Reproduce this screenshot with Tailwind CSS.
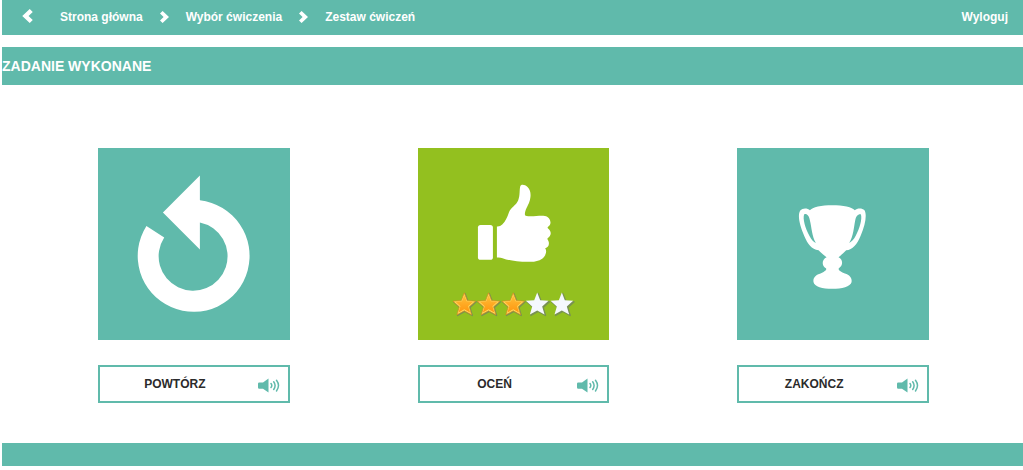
<!DOCTYPE html>
<html lang="pl">
<head>
<meta charset="utf-8">
<meta name="viewport" content="width=device-width, initial-scale=1">
<title>Zadanie wykonane</title>
<script src="https://cdn.jsdelivr.net/npm/@tailwindcss/browser@4"></script>
</head>
<body class="bg-white pl-0.5 font-['Liberation_Sans',Arial,sans-serif] text-[#2b2b2b]">
<svg class="hidden" aria-hidden="true">
  <defs>
    <symbol id="chevron" viewBox="0 0 9 12"><path d="M0 2.600 2.600 0 9 6 2.600 12 0 9.400 3.600 6Z" fill="#fff"/></symbol>
    <symbol id="speaker" viewBox="0 0 22 15">
      <path d="M1.2 4.5H5L10.5.5V14.5L5 10.7H1.2Q0 10.7 0 9.500V5.700Q0 4.500 1.200 4.500Z" fill="#60baab"/>
      <path d="M13 5.500Q14.600 7.500 13 9.500M15.700 3.800Q18.500 7.500 15.700 11.500M18.500 2.300Q22.500 7.500 18.500 13" fill="none" stroke="#60baab" stroke-width="1.500" stroke-linecap="round"/>
    </symbol>
    <path id="star" d="M0-34 9-11 34-9 15 8 22 32 0 20-22 32-15 8-34-9-9-11Z"/>
  </defs>
</svg>

<header class="flex h-[35px] items-center justify-between bg-[#60baab] pr-[15px] pb-0.5 pl-5 text-xs font-bold text-white">
  <nav aria-label="Ścieżka" class="flex items-center gap-[17px]">
    <a href="#" aria-label="Wstecz" class="mr-[10px] mb-0.5"><svg class="h-[14px] w-[11px] rotate-180"><use href="#chevron"/></svg></a>
    <a href="#">Strona główna</a>
    <svg class="h-3 w-[9px]" aria-hidden="true"><use href="#chevron"/></svg>
    <a href="#">Wybór ćwiczenia</a>
    <svg class="h-3 w-[9px]" aria-hidden="true"><use href="#chevron"/></svg>
    <a href="#">Zestaw ćwiczeń</a>
  </nav>
  <a href="#">Wyloguj</a>
</header>

<h1 class="mt-3 flex h-[38px] items-center bg-[#60baab] text-sm font-bold text-white">ZADANIE WYKONANE</h1>

<main class="grid grid-cols-3 pt-[63px] pr-[30px] pb-10 pl-8">
  <section class="mx-auto flex w-3/5 flex-col gap-[25px]">
    <button type="button" aria-labelledby="repeat" class="aspect-square w-full bg-[#60baab]">
      <svg viewBox="0 0 192 192" class="block w-full" fill="#fff">
        <path d="M102 27.500V52.400A56 56 0 1 1 48.500 78L66.300 89.500A34.500 34.500 0 1 0 102 74.500V101.500L65 64.500Z"/>
      </svg>
    </button>
    <div class="flex h-[38px] items-center border-2 border-[#60baab] pr-2">
      <span id="repeat" class="flex-1 text-center text-xs font-bold">POWTÓRZ</span>
      <button type="button" aria-label="Odsłuchaj: Powtórz" class="mt-1 ml-2"><svg class="block h-[15px] w-[22px]"><use href="#speaker"/></svg></button>
    </div>
  </section>

  <section class="mx-auto flex w-3/5 flex-col gap-[25px]">
    <button type="button" aria-labelledby="rate" class="aspect-square w-full bg-[#93c01f]">
      <svg viewBox="0 0 192 192" class="block w-full" fill="#fff">
        <defs>
          <linearGradient id="gold" x1="0" y1="0" x2="0" y2="1">
            <stop offset="0" stop-color="#ffbe38"/><stop offset="1" stop-color="#ff9610"/>
          </linearGradient>
        </defs>
        <g transform="translate(47 27) scale(.3333)">
          <rect x="39" y="150" width="45" height="105" rx="8"/>
          <path d="M96 155Q105 156 112 149C122 139 127 128 132 113C137 97 154 92 160 76C166 60 163 48 166 35C167 27 180 28 188 36C200 47 198 66 194 79C189 95 180 104 180 119Q180 124 190 124C210 125 225 121 240 123C253 125 261 140 255 150C252 154 246 156 249 160C261 169 260 182 249 189C245 193 251 195 252 203C253 212 249 217 241 220C247 228 243 242 234 250C222 260 205 261 190 261C155 261 132 257 113 250Q106 247 96 248Z"/>
        </g>
        <g transform="translate(27 137) scale(.3333)" stroke-linejoin="round">
          <g fill="#6f7f68" stroke="#6f7f68" stroke-width="4" opacity=".7">
            <use href="#star" x="60" y="60"/><use href="#star" x="133" y="60"/><use href="#star" x="207" y="60"/><use href="#star" x="280" y="60"/><use href="#star" x="354" y="60"/>
          </g>
          <g fill="#ffdc62" stroke="#d98a18" stroke-width="2">
            <use href="#star" x="58" y="58"/><use href="#star" x="131" y="58"/><use href="#star" x="205" y="58"/>
          </g>
          <g fill="url(#gold)">
            <use href="#star" transform="translate(58 58) scale(.78)"/><use href="#star" transform="translate(131 58) scale(.78)"/><use href="#star" transform="translate(205 58) scale(.78)"/>
          </g>
          <g fill="#f5f8fd">
            <use href="#star" x="277" y="57"/><use href="#star" x="351" y="57"/>
          </g>
        </g>
      </svg>
    </button>
    <div class="flex h-[38px] items-center border-2 border-[#60baab] pr-2">
      <span id="rate" class="flex-1 text-center text-xs font-bold">OCEŃ</span>
      <button type="button" aria-label="Odsłuchaj: Oceń" class="mt-1 ml-2"><svg class="block h-[15px] w-[22px]"><use href="#speaker"/></svg></button>
    </div>
  </section>

  <section class="mx-auto flex w-3/5 flex-col gap-[25px]">
    <button type="button" aria-labelledby="finish" class="aspect-square w-full bg-[#60baab]">
      <svg viewBox="0 0 192 192" class="block w-full" fill="#fff">
        <g transform="translate(48 47) scale(.3333)">
          <path d="M75 46C82 37 110 31 142 31C174 31 203 37 210 46C216 40 231 38 239 46C247 60 241 90 228 121C217 149 203 165 184 166C177 174 168 181 161 187C174 192 176 213 162 220C158 225 168 231 180 236C196 241 202 250 200 262C197 275 171 282 142 282C113 282 88 275 86 262C83 249 93 240 107 236C117 232 128 225 123 220C109 212 111 193 125 187C118 181 108 174 101 166C80 163 68 147 58 123C44 91 37 61 46 47C53 38 68 39 75 46Z"/>
          <path fill="#60baab" d="M58 58C65 55 73 62 75 77C80 96 81 126 93 144C86 142 79 134 73 122C62 101 52 71 58 58ZM228 58C221 56 213 62 211 77C207 96 206 124 193 144C200 141 207 134 213 122C224 101 233 72 228 58Z"/>
        </g>
      </svg>
    </button>
    <div class="flex h-[38px] items-center border-2 border-[#60baab] pr-2">
      <span id="finish" class="flex-1 text-center text-xs font-bold">ZAKOŃCZ</span>
      <button type="button" aria-label="Odsłuchaj: Zakończ" class="mt-1 ml-2"><svg class="block h-[15px] w-[22px]"><use href="#speaker"/></svg></button>
    </div>
  </section>
</main>

<footer class="h-[23px] bg-[#60baab]"></footer>
</body>
</html>
